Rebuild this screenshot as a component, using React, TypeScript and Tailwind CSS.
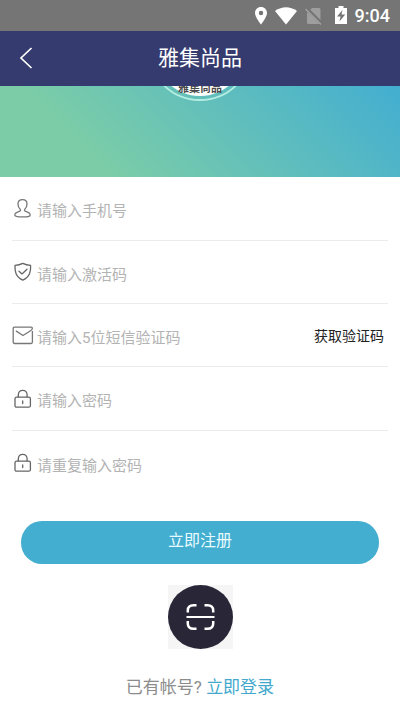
import React from 'react';

interface FieldProps {
    id: string;
    type?: string;
    placeholder: string;
    icon: React.ReactNode;
    className: string;
    children?: React.ReactNode;
}

const UserIcon = () => (
    <svg width="20" height="20" viewBox="0 0 20 20" fill="none" stroke="#777" strokeWidth="1.3" strokeLinejoin="round">
        <path d="M10.500 0.700C7.800 0.700 6 2.500 6 5.100C6 7.300 7 9.200 8.200 10.300C8.800 11 8.500 11.900 7.600 12.300C4.800 13.300 2.800 13.900 2.800 15.900C2.800 17.700 5.500 17.900 10.500 17.900C15.500 17.900 18.200 17.700 18.200 15.900C18.200 13.900 16.200 13.300 13.400 12.300C12.500 11.900 12.200 11 12.800 10.300C14 9.200 15 7.300 15 5.100C15 2.500 13.200 0.700 10.500 0.700Z" />
    </svg>
);

const ShieldIcon = () => (
    <svg width="20" height="20" viewBox="0 0 20 20" fill="none" stroke="#666" strokeWidth="1.3" strokeLinejoin="round" strokeLinecap="round">
        <path d="M10.800 1.400C8.300 2.600 5.800 3.200 3 3.400C2.700 9.500 3.600 14.600 10.800 18.200C18 14.600 18.900 9.500 18.600 3.400C15.800 3.200 13.300 2.600 10.800 1.400Z" />
        <path d="M7 9.300L10 11.900L15 7.300" />
    </svg>
);

const MailIcon = () => (
    <svg width="22" height="20" viewBox="0 0 22 20" fill="none" stroke="#777" strokeWidth="1.3" strokeLinejoin="round" strokeLinecap="round">
        <path d="M20.400 6.500V17.100Q20.400 18.500 19 18.500H2.500Q1.200 18.500 1.200 17.100V3.700Q1.200 2.100 2.500 2.100H19Q20.400 2.100 20.400 3.300Q20.300 4.700 18.500 5.800L11 10.500L4.300 6.100" />
    </svg>
);

const LockIcon = () => (
    <svg width="20" height="20" viewBox="0 0 20 20" fill="none" stroke="#666" strokeWidth="1.3" strokeLinecap="round">
        <rect x="3" y="8.200" width="15.400" height="10" rx="1.500" />
        <path d="M6.300 8V5.800C6.300 3.200 8.200 1.300 10.700 1.300S15.100 3.200 15.100 5.800V8M10.700 12V14.500" />
    </svg>
);

const Field: React.FC<FieldProps> = ({ id, type = 'text', placeholder, icon, className, children }) => (
    <div className={`flex items-center ${className}`}>
        <label htmlFor={id} aria-label={placeholder} className="w-[25px] shrink-0 flex">
            {icon}
        </label>
        <input
            id={id}
            type={type}
            placeholder={placeholder}
            className="flex-1 min-w-0 h-8 pt-[5px] text-[15px] text-gray-700 placeholder:text-[#b3b3b3] outline-none"
        />
        {children}
    </div>
);

const StatusBar = () => (
    <div className="h-[31px] bg-[#757575] flex items-center justify-end gap-2 pr-[10px] text-white">
        <svg width="12" height="18" viewBox="0 0 12 18" fill="#fff">
            <path fillRule="evenodd" d="M6 0C2.500 0 0 2.700 0 6C0 10.200 6 17.500 6 17.500S12 10.200 12 6C12 2.700 9.500 0 6 0ZM6 3.800A2.200 2.200 0 1 1 6 8.200A2.200 2.200 0 0 1 6 3.800Z" />
        </svg>
        <svg width="22" height="18" viewBox="0 0 22 18" fill="#fff">
            <path d="M0 4Q11 -3.500 22 4L11 17.500Z" />
        </svg>
        <svg width="18" height="18" viewBox="0 0 18 18">
            <path d="M7 1H14Q15.500 1 15.500 2.500V15.500Q15.500 17 14 17H3.500Q2 17 2 15.500V6Z" fill="#9e9e9e" />
            <path d="M1.500 1.500L17 17" stroke="#757575" strokeWidth="3.500" />
            <path d="M0.500 2L16 17.500" stroke="#a3a3a3" strokeWidth="1.300" />
        </svg>
        <div className="flex items-center gap-2 pl-1">
            <svg width="12" height="20" viewBox="0 0 12 20">
                <path d="M3.500 0H8.500V2H12V18H0V2H3.500Z" fill="#fff" />
                <path d="M7.500 4L2 10.500H5.500L4.500 15.500L10.200 8.500H6.500Z" fill="#757575" />
            </svg>
            <span className="font-[Roboto,sans-serif] text-[18px] leading-6 font-medium">9:04</span>
        </div>
    </div>
);

export default function App() {
    return (
        <div className="min-h-screen bg-white font-[Roboto,'Noto_Sans_CJK_SC',sans-serif]">
            <StatusBar />

            <header className="h-[55px] pb-[2px] bg-[#353b6e] text-white grid grid-cols-[52px_1fr_52px] items-center">
                <button aria-label="返回" className="h-full flex items-center pl-[19px]">
                    <svg width="14" height="22" viewBox="0 0 14 22" fill="none" stroke="#fff" strokeWidth="1.700">
                        <path d="M12.500 1L2 11L12.500 21" />
                    </svg>
                </button>
                <h1 className="text-center text-[21px] leading-8">雅集尚品</h1>
            </header>

            {/* Banner with the lower edge of the round logo */}
            <div className="h-[91px] flex justify-center items-start bg-[linear-gradient(45deg,#7ccda7_22%,#43aed1_100%)]">
                <svg width="120" height="18" viewBox="0 0 120 18" role="img" aria-label="雅集尚品">
                    <circle cx="60" cy="-38" r="52" fill="none" stroke="#b4eee3" strokeWidth="1.800" />
                    <circle cx="60" cy="-36" r="46" fill="#fff" />
                    <text x="60" y="6" textAnchor="middle" fontSize="11" fontWeight="700" fill="#4a4a4a">雅集尚品</text>
                </svg>
            </div>

            <form onSubmit={(e) => e.preventDefault()}>
                <div className="px-3">
                    <Field id="phone" type="tel" placeholder="请输入手机号" icon={<UserIcon />} className="h-16 border-b border-[#ececec]" />
                    <Field id="code" placeholder="请输入激活码" icon={<ShieldIcon />} className="h-[63px] border-b border-[#ececec]" />
                    <Field id="sms" placeholder="请输入5位短信验证码" icon={<MailIcon />} className="h-[63px] border-b border-[#ececec]">
                        <button type="button" className="pt-[3px] text-[14px] text-[#222] pr-1">获取验证码</button>
                    </Field>
                    <Field id="password" type="password" placeholder="请输入密码" icon={<LockIcon />} className="h-16 border-b border-[#ececec]" />
                    <Field id="confirm" type="password" placeholder="请重复输入密码" icon={<LockIcon />} className="h-16" />
                </div>

                <div className="px-[21px] pt-[26px]">
                    <button type="submit" className="w-full h-[43px] pb-1 rounded-[21px] bg-[#43aed0] text-[16px] text-[#e9fbff]">
                        立即注册
                    </button>
                </div>
            </form>

            <div className="flex justify-center pt-[21px]">
                <button aria-label="扫一扫" className="bg-[#f5f5f5]">
                    <svg width="65" height="64" viewBox="0 0 65 64" fill="none" stroke="#fff" strokeWidth="2.500">
                        <ellipse cx="32.500" cy="32" rx="32.500" ry="32" fill="#282637" stroke="none" />
                        <path d="M19.800 27.500V25.500Q19.800 20.200 25.500 20.200H28.500M36.500 20.200H39.500Q45.200 20.200 45.200 25.500V27.500M19.800 36V38.500Q19.800 43.800 25.500 43.800H28.500M36.500 43.800H39.500Q45.200 43.800 45.200 38.500V36" />
                        <path d="M18.500 32H46.500" strokeWidth="2" />
                    </svg>
                </button>
            </div>

            <p className="pt-[26px] text-center text-[17px] leading-6 text-[#8c8c8c]">
                已有帐号? <a href="#login" className="text-[#43a9cc]">立即登录</a>
            </p>
        </div>
    );
}
